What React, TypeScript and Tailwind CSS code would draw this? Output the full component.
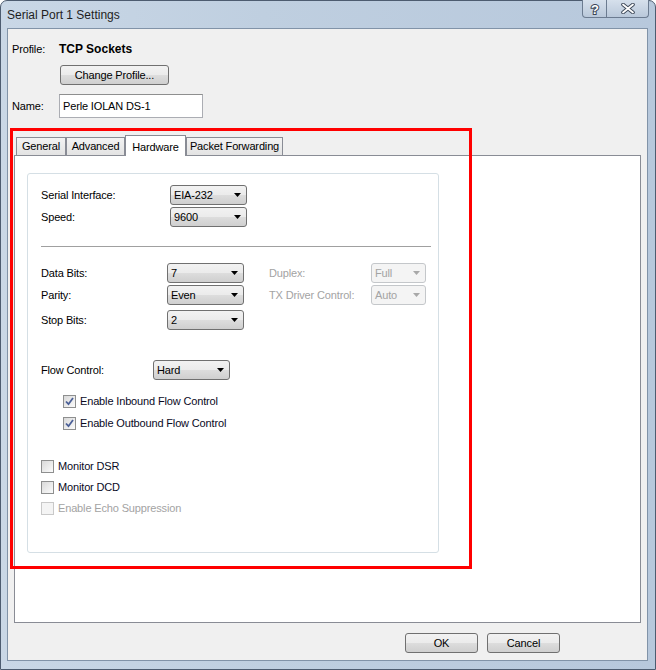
import React from "react";

function Arrow({ disabled }: { disabled?: boolean }) {
  return (
    <svg width="7" height="4" viewBox="0 0 7 4" className="shrink-0">
      <path d="M0 0H7L3.5 4Z" fill={disabled ? "#a8a8a8" : "#000"} />
    </svg>
  );
}

function Combo({ value, w, disabled }: { value: string; w: string; disabled?: boolean }) {
  return (
    <div
      className={`${w} h-[20px] flex items-center justify-between rounded-[3px] border pl-[3px] pr-[5px] ${
        disabled
          ? "border-[#c4c7ca] bg-[#f4f4f4] text-[#a3a3a3]"
          : "border-[#707070] bg-[linear-gradient(#f2f2f2_0%,#ebebeb_50%,#dddddd_51%,#cfcfcf_100%)] text-black"
      }`}
    >
      <span>{value}</span>
      <Arrow disabled={disabled} />
    </div>
  );
}

function Check({ label, checked, disabled, indent }: { label: string; checked?: boolean; disabled?: boolean; indent?: boolean }) {
  return (
    <div className={`h-[13px] flex items-center gap-[4px] ${indent ? "ml-[35px]" : "ml-[13px]"}`}>
      <div
        className={`w-[13px] h-[13px] border flex items-center justify-center ${
          disabled
            ? "border-[#c9c9c9] bg-[#f4f4f4]"
            : "border-[#8e8f8f] bg-[linear-gradient(135deg,#d9d9d9,#fbfbfb)]"
        }`}
      >
        {checked && (
          <svg width="9" height="9" viewBox="0 0 9 9">
            <path d="M1 4.5L3.5 7.2L8 1" fill="none" stroke="#4a5f97" strokeWidth="1.8" />
          </svg>
        )}
      </div>
      <span className={disabled ? "text-[#a3a3a3]" : "text-[#0a0a1e]"}>{label}</span>
    </div>
  );
}

function Btn({ label, w }: { label: string; w: string }) {
  return (
    <div
      className={`${w} h-[20px] flex items-center justify-center rounded-[3px] border border-[#707070] bg-[linear-gradient(#f2f2f2_0%,#ebebeb_50%,#dddddd_51%,#cfcfcf_100%)]`}
    >
      {label}
    </div>
  );
}

const TABS = [
  { name: "General", w: "w-[50px]" },
  { name: "Advanced", w: "w-[59px]" },
  { name: "Hardware", w: "w-[61px]", active: true },
  { name: "Packet Forwarding", w: "w-[97px]" },
];

export default function App() {
  return (
    <div className="relative w-[656px] h-[670px] flex flex-col rounded-t-[7px] border border-[#4d5c70] bg-[linear-gradient(90deg,#c9d7e6,#bfcfe0_40%,#b7c8dc)] font-['Liberation_Sans',Arial,sans-serif] text-[11px] tracking-[-0.15px] text-black">
      {/* title bar */}
      <div className="h-[27px] flex items-start shrink-0">
        <div className="pl-[6px] pt-[5px] text-[12px] tracking-normal text-[#1e1e1e]">Serial Port 1 Settings</div>
        <div className="ml-auto mr-[6px] flex h-[18px] -mt-px">
          <div className="w-[25px] flex items-center justify-center rounded-bl-[4px] border border-t-0 border-[#6b7b90] bg-[linear-gradient(#d6e0ec,#b9c8da)]">
            <svg width="12" height="15" viewBox="0 0 12 15">
              <text
                x="6"
                y="12.5"
                textAnchor="middle"
                fontFamily="Liberation Sans, Arial, sans-serif"
                fontWeight="bold"
                fontSize="13"
                fill="#fff"
                stroke="#3b4656"
                strokeWidth="2"
                paintOrder="stroke"
              >
                ?
              </text>
            </svg>
          </div>
          <div className="w-[42px] flex items-center justify-center rounded-br-[4px] border border-t-0 border-l-0 border-[#6b7b90] bg-[linear-gradient(#d6e0ec,#b9c8da)]">
            <svg width="14" height="11" viewBox="0 0 14 11">
              <path d="M2 1.5L12 9.5M12 1.5L2 9.5" stroke="#3b4656" strokeWidth="3.6" strokeLinecap="round" />
              <path d="M2 1.5L12 9.5M12 1.5L2 9.5" stroke="#fff" strokeWidth="1.8" strokeLinecap="round" />
            </svg>
          </div>
        </div>
      </div>

      {/* client area */}
      <div className="ml-[6px] w-[641px] h-[633px] border border-[#8193a8] bg-[#f0f0f0] flex flex-col">
        <div className="mt-[13px] ml-[4px] h-[14px] flex items-center">
          <span className="w-[47px]">Profile:</span>
          <span className="text-[12px] font-bold tracking-normal">TCP Sockets</span>
        </div>
        <div className="mt-[9px] ml-[52px]">
          <Btn label="Change Profile..." w="w-[109px]" />
        </div>
        <div className="mt-[9px] ml-[4px] flex items-center">
          <span className="w-[47px]">Name:</span>
          <div className="w-[144px] h-[24px] flex items-center pl-[3px] border border-[#abadb3] border-t-[#8e8f8f] bg-white">
            Perle IOLAN DS-1
          </div>
        </div>

        {/* tabs */}
        <div className="mt-[17px] ml-[8px] h-[21px] flex items-end relative z-10 -mb-px">
          {TABS.map((t) =>
            t.active ? (
              <div
                key={t.name}
                className={`${t.w} h-[21px] flex items-start justify-center pt-[3px] border border-b-0 border-[#898c95] bg-white`}
              >
                {t.name}
              </div>
            ) : (
              <div
                key={t.name}
                className={`${t.w} h-[18px] mb-px flex items-center justify-center border border-b-0 border-[#898c95] bg-[linear-gradient(#f3f3f3,#e3e3e3)]`}
              >
                {t.name}
              </div>
            )
          )}
        </div>
        <div className="ml-[6px] w-[627px] h-[468px] border border-[#898c95] bg-white">
          <div className="mt-[17px] ml-[12px] w-[412px] h-[380px] rounded-[3px] border border-[#d5dfe5] flex flex-col">
            <div className="mt-[11px] ml-[13px] flex flex-col gap-[2px]">
              <div className="flex items-center">
                <span className="w-[129px]">Serial Interface:</span>
                <Combo value="EIA-232" w="w-[77px]" />
              </div>
              <div className="flex items-center">
                <span className="w-[129px]">Speed:</span>
                <Combo value="9600" w="w-[77px]" />
              </div>
            </div>

            <div className="mt-[19px] ml-[13px] w-[390px] h-px bg-[#a0a0a0]" />

            <div className="mt-[16px] ml-[13px] flex flex-col">
              <div className="flex items-center">
                <span className="w-[126px]">Data Bits:</span>
                <Combo value="7" w="w-[77px]" />
                <span className="ml-[25px] w-[102px] text-[#a3a3a3]">Duplex:</span>
                <Combo value="Full" w="w-[55px]" disabled />
              </div>
              <div className="mt-[2px] flex items-center">
                <span className="w-[126px]">Parity:</span>
                <Combo value="Even" w="w-[77px]" />
                <span className="ml-[25px] w-[102px] text-[#a3a3a3]">TX Driver Control:</span>
                <Combo value="Auto" w="w-[55px]" disabled />
              </div>
              <div className="mt-[5px] flex items-center">
                <span className="w-[126px]">Stop Bits:</span>
                <Combo value="2" w="w-[77px]" />
              </div>
              <div className="mt-[30px] flex items-center">
                <span className="w-[112px]">Flow Control:</span>
                <Combo value="Hard" w="w-[77px]" />
              </div>
            </div>

            <div className="mt-[15px]">
              <Check label="Enable Inbound Flow Control" checked indent />
            </div>
            <div className="mt-[9px]">
              <Check label="Enable Outbound Flow Control" checked indent />
            </div>
            <div className="mt-[30px]">
              <Check label="Monitor DSR" />
            </div>
            <div className="mt-[8px]">
              <Check label="Monitor DCD" />
            </div>
            <div className="mt-[8px]">
              <Check label="Enable Echo Suppression" disabled />
            </div>
          </div>
        </div>

        <div className="mt-[10px] mr-[87px] flex justify-end gap-[9px]">
          <Btn label="OK" w="w-[73px]" />
          <Btn label="Cancel" w="w-[73px]" />
        </div>
      </div>

      {/* red annotation frame */}
      <div className="pointer-events-none absolute left-[9px] top-[127px] w-[462px] h-[441px] border-[3px] border-[#ff0000]" />
    </div>
  );
}
